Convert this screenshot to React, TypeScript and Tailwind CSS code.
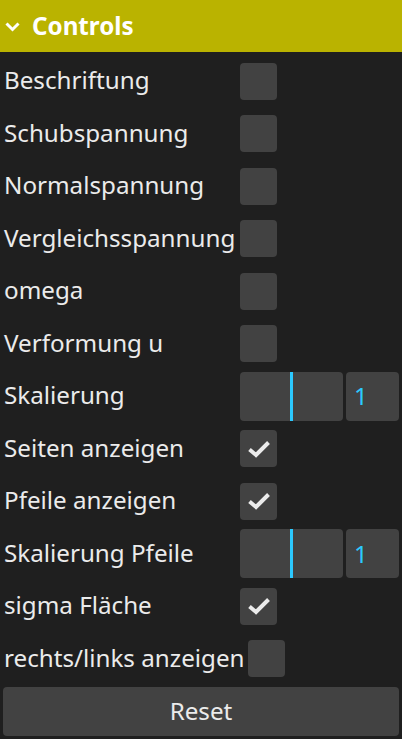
import React, { useState } from "react";

type Row =
  | { kind: "check"; label: string; value: boolean }
  | { kind: "slider"; label: string; value: number };

const rows: Row[] = [
  { kind: "check", label: "Beschriftung", value: false },
  { kind: "check", label: "Schubspannung", value: false },
  { kind: "check", label: "Normalspannung", value: false },
  { kind: "check", label: "Vergleichsspannung", value: false },
  { kind: "check", label: "omega", value: false },
  { kind: "check", label: "Verformung u", value: false },
  { kind: "slider", label: "Skalierung", value: 1 },
  { kind: "check", label: "Seiten anzeigen", value: true },
  { kind: "check", label: "Pfeile anzeigen", value: true },
  { kind: "slider", label: "Skalierung Pfeile", value: 1 },
  { kind: "check", label: "sigma Fläche", value: true },
  { kind: "check", label: "rechts/links anzeigen", value: false },
];

const Check: React.FC<{ on: boolean; onToggle: () => void }> = ({ on, onToggle }) => (
  <button
    onClick={onToggle}
    className="w-[37px] h-[37px] rounded-[4px] bg-[#424242] flex items-center justify-center shrink-0"
  >
    {on && (
      <svg width="26" height="22" viewBox="0 0 26 22">
        <path d="M3.5 11.5 L10 17 L22.5 4.5" fill="none" stroke="#ebebeb" strokeWidth="4" />
      </svg>
    )}
  </button>
);

const Slider: React.FC<{ value: number }> = ({ value }) => (
  <div className="flex flex-1 gap-[3px] h-[49px]">
    <div className="relative w-[103px] rounded-[4px] bg-[#424242]">
      <div className="absolute top-0 bottom-0 left-[50px] w-[3px] bg-[#2cc9ff]" />
    </div>
    <div className="flex-1 rounded-[4px] bg-[#424242] flex items-center pl-[8px] text-[24.2px] text-[#2cc9ff]">
      {value}
    </div>
  </div>
);

export default function App() {
  const [vals, setVals] = useState(rows.map((r) => (r.kind === "check" ? r.value : false)));
  const [open, setOpen] = useState(true);

  return (
    <div className="w-[402px] h-[739px] bg-[#1f1f1f] text-[#ebebeb] font-['Noto_Sans',sans-serif] overflow-hidden">
      <button
        onClick={() => setOpen(!open)}
        className="w-full h-[52px] bg-[#bab300] flex items-center pl-[5px] gap-[12px] text-white"
      >
        <svg width="15" height="11" viewBox="0 0 15 11">
          <path d="M1.5 2.5 L7.5 8.5 L13.5 2.5" fill="none" stroke="#ffffff" strokeWidth="3" />
        </svg>
        <span className="text-[24.2px] font-bold leading-none">Controls</span>
      </button>

      {open && (
        <div className="pt-[3px]">
          {rows.map((r, i) => (
            <div key={r.label} className="h-[52.5px] flex items-center pl-[4px] pr-[3px]">
              <div className="min-w-[236px] pr-[4px] text-[24.2px] whitespace-nowrap leading-none pb-[2px]">
                {r.label}
              </div>
              {r.kind === "check" ? (
                <Check
                  on={vals[i]}
                  onToggle={() => setVals(vals.map((v, j) => (j === i ? !v : v)))}
                />
              ) : (
                <Slider value={r.value} />
              )}
            </div>
          ))}
          <div className="h-[52.5px] flex items-center px-[3px]">
            <button className="w-full h-[49px] rounded-[4px] bg-[#424242] text-[24.2px] text-[#ebebeb]">
              Reset
            </button>
          </div>
        </div>
      )}
    </div>
  );
}
